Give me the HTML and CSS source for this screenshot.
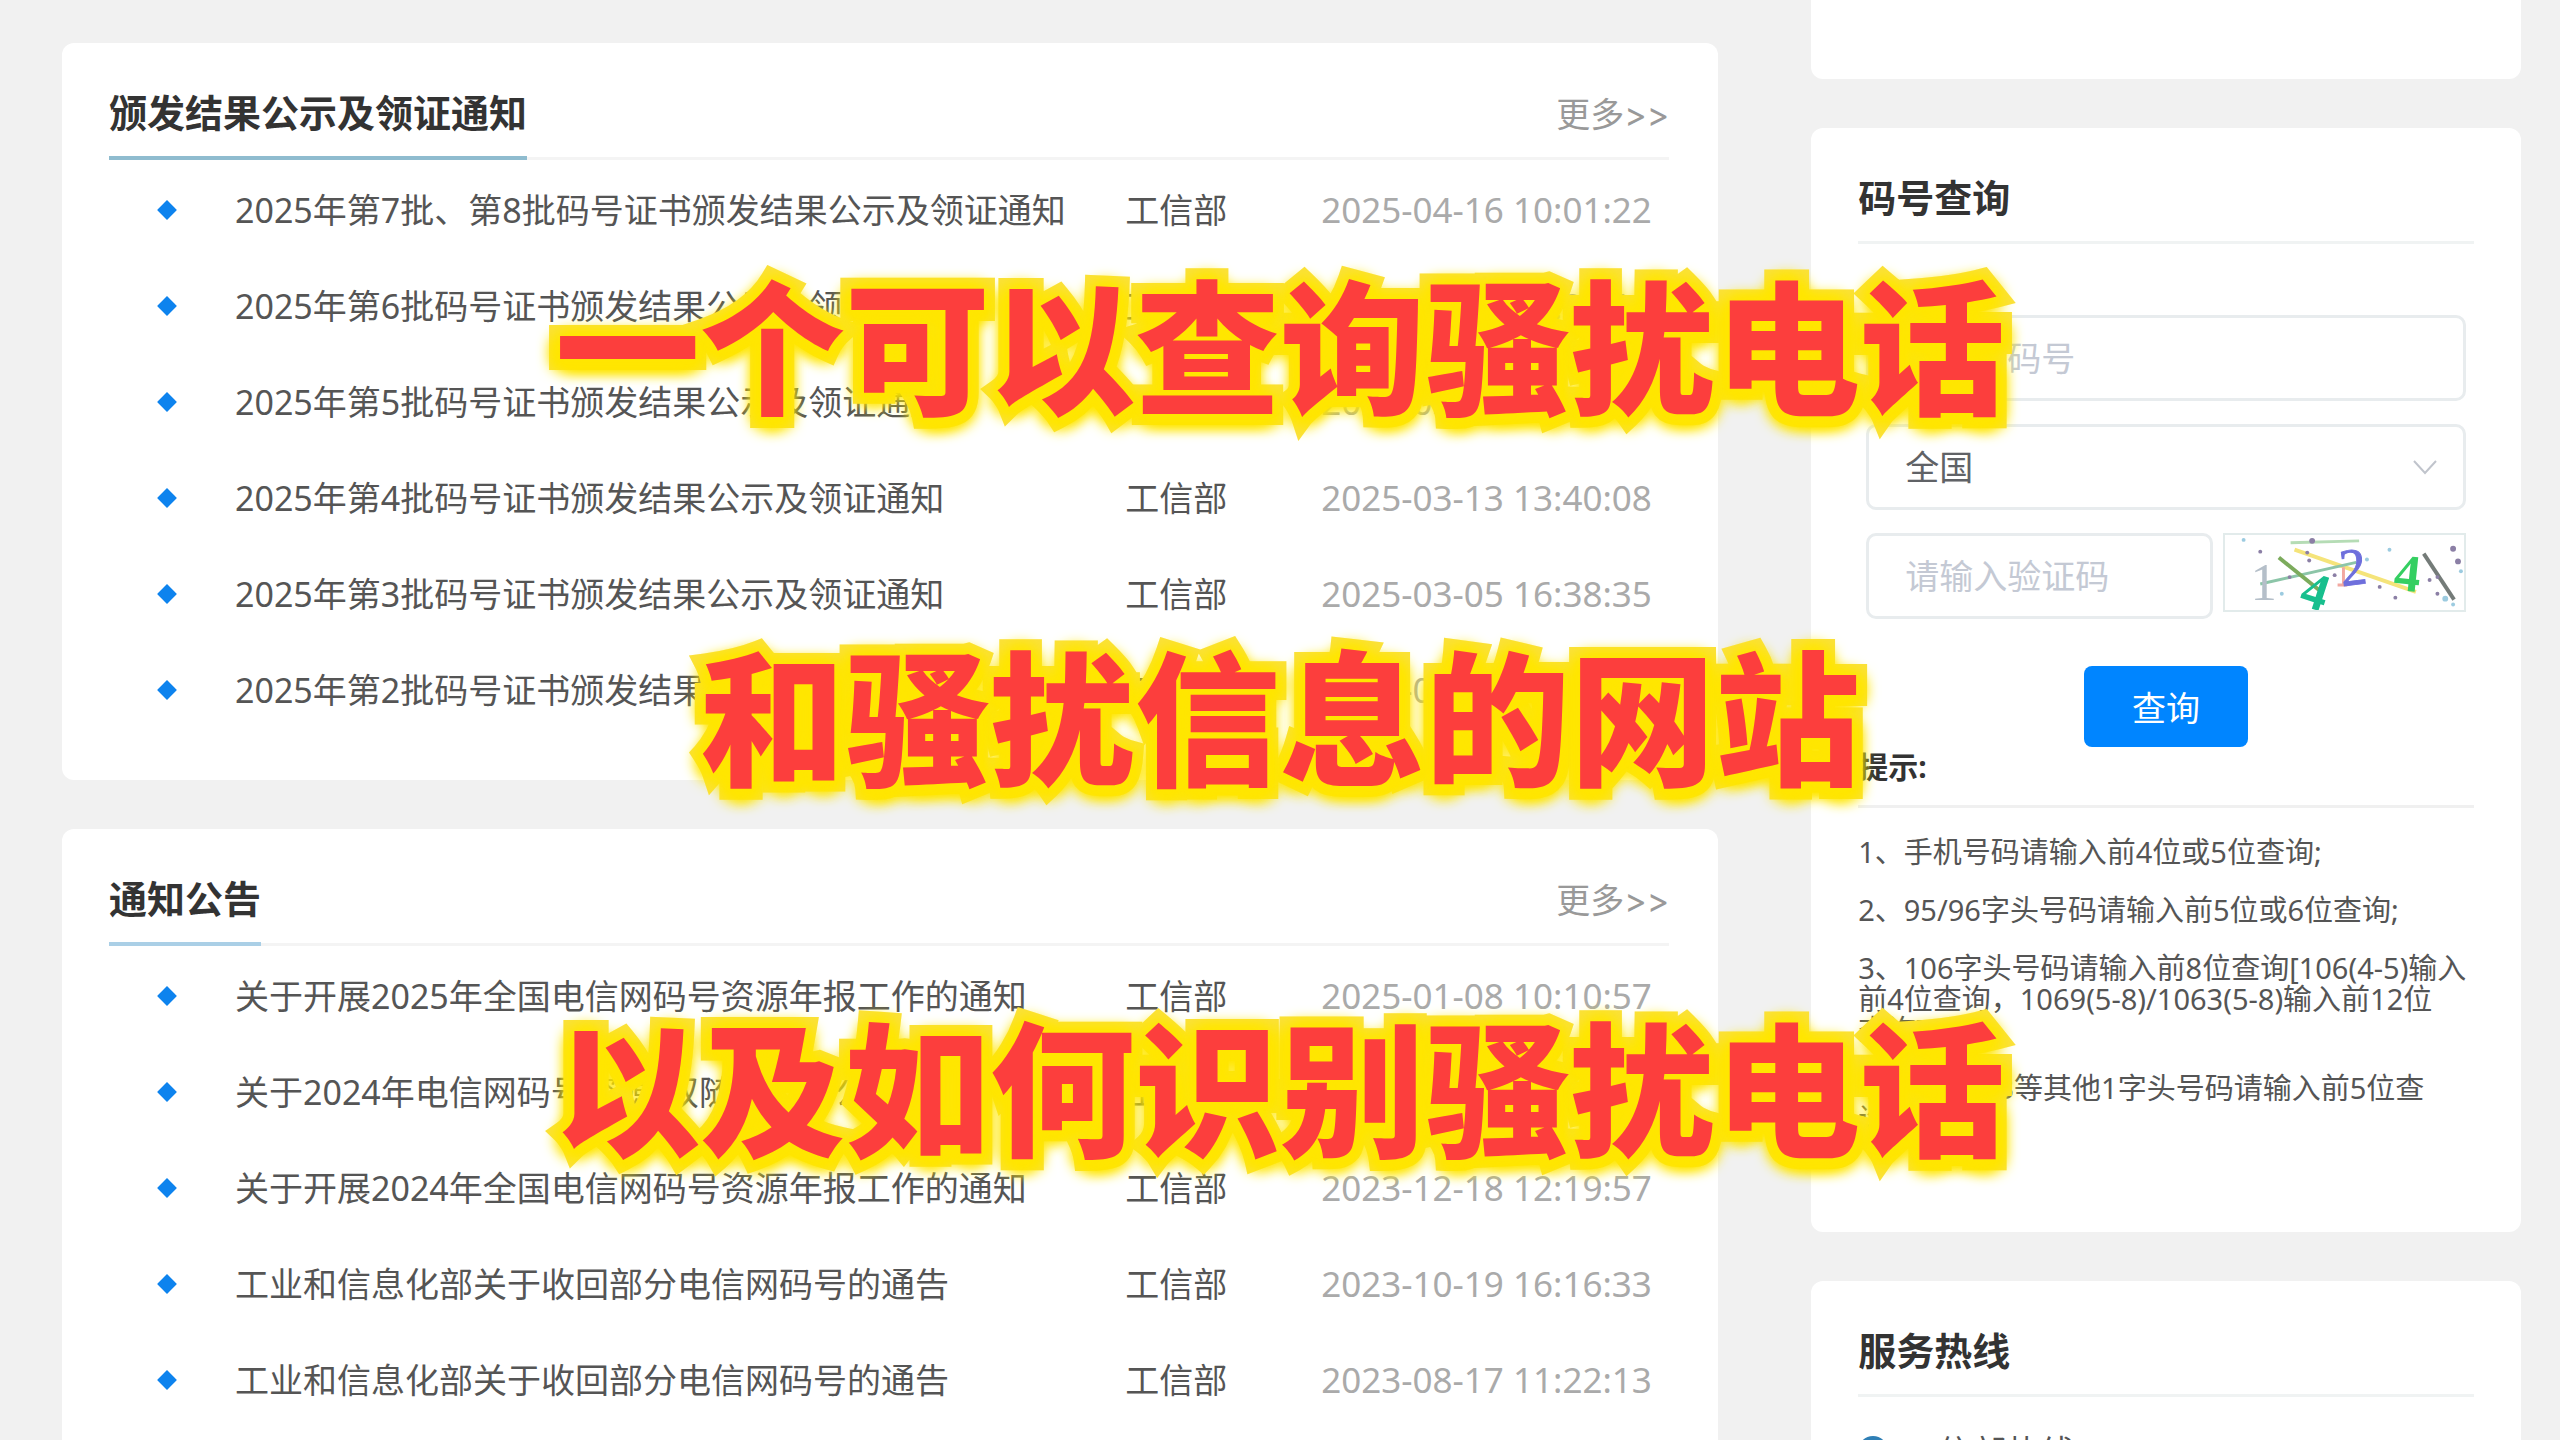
FILE: index.html
```
<!DOCTYPE html>
<html lang="zh-CN">
<head>
  <meta charset="UTF-8">
  <meta name="viewport" content="width=device-width, initial-scale=1.0">
  <title>码号查询</title>
  <link rel="stylesheet" href="styles.css">
</head>
<body>
  <div class="page">
    <main class="main-column">
      <section class="card news">
        <div class="card-heading">
          <h2>颁发结果公示及领证通知</h2>
          <a class="more" href="#">更多<span class="arrows">&gt;&gt;</span></a>
        </div>
        <ul class="news-list">
          <li><a href="#">2025年第7批、第8批码号证书颁发结果公示及领证通知</a><span class="source">工信部</span><time>2025-04-16 10:01:22</time></li>
          <li><a href="#">2025年第6批码号证书颁发结果公示及领证通知</a><span class="source">工信部</span><time>2025-04-03 15:20:16</time></li>
          <li><a href="#">2025年第5批码号证书颁发结果公示及领证通知</a><span class="source">工信部</span><time>2025-03-20 10:12:31</time></li>
          <li><a href="#">2025年第4批码号证书颁发结果公示及领证通知</a><span class="source">工信部</span><time>2025-03-13 13:40:08</time></li>
          <li><a href="#">2025年第3批码号证书颁发结果公示及领证通知</a><span class="source">工信部</span><time>2025-03-05 16:38:35</time></li>
          <li><a href="#">2025年第2批码号证书颁发结果公示及领证通知</a><span class="source">工信部</span><time>2025-02-20 09:30:00</time></li>
        </ul>
      </section>

      <section class="card news">
        <div class="card-heading notice">
          <h2>通知公告</h2>
          <a class="more" href="#">更多<span class="arrows">&gt;&gt;</span></a>
        </div>
        <ul class="news-list">
          <li><a href="#">关于开展2025年全国电信网码号资源年报工作的通知</a><span class="source">工信部</span><time>2025-01-08 10:10:57</time></li>
          <li><a href="#">关于2024年电信网码号资源“双随机、一公开”</a><span class="source">工信部</span><time>2024-08-20 10:30:11</time></li>
          <li><a href="#">关于开展2024年全国电信网码号资源年报工作的通知</a><span class="source">工信部</span><time>2023-12-18 12:19:57</time></li>
          <li><a href="#">工业和信息化部关于收回部分电信网码号的通告</a><span class="source">工信部</span><time>2023-10-19 16:16:33</time></li>
          <li><a href="#">工业和信息化部关于收回部分电信网码号的通告</a><span class="source">工信部</span><time>2023-08-17 11:22:13</time></li>
        </ul>
      </section>
    </main>

    <aside class="side-column">
      <section class="card side-top"></section>

      <section class="card side-card">
        <h2>码号查询</h2>
        <form class="query-form">
          <input type="text" aria-label="码号" placeholder="请输入码号">
          <div class="select-box">
            <select aria-label="地区">
              <option>全国</option>
            </select>
            <svg class="chevron" viewBox="0 0 26 16" aria-hidden="true">
              <path d="M2 2 L13 14 L24 2" />
            </svg>
          </div>
          <div class="captcha-row">
            <input type="text" aria-label="验证码" placeholder="请输入验证码">
            <svg class="captcha" viewBox="0 0 244 77" role="img" aria-label="验证码图片">
              <g fill="none" stroke-width="3">
                <path stroke="#b5dcb5" d="M67 8 L137 6" />
                <path stroke="#f5e47a" stroke-width="4" d="M71 15 L195 58" />
                <path stroke="#8cc5a8" d="M36 50 L134 28" />
                <path stroke="#7cab5c" stroke-width="4" d="M55 23 L97 57" />
                <path stroke="#747b78" stroke-width="4" d="M203 19 L234 66" />
                <path stroke="#f2a8a0" d="M121 33 V51 M115 51 H125" />
              </g>
              <g class="captcha-digits">
                <text x="26" y="66" fill="#b5bfc9">1</text>
                <text x="78" y="75" fill="#18bf8e" font-weight="bold" transform="rotate(18 90 60)">4</text>
                <text x="118" y="51" fill="#6e6fdc" stroke="#6e6fdc" transform="rotate(-7 130 40)">2</text>
                <text x="173" y="57" fill="#35cf62" font-weight="bold" transform="rotate(6 184 40)">4</text>
              </g>
              <g fill="#8b7fa5">
                <circle cx="36" cy="17" r="2" /><circle cx="89" cy="6" r="3" />
                <circle cx="84" cy="18" r="2" /><circle cx="86" cy="26" r="2" />
                <circle cx="112" cy="41" r="2" /><circle cx="66" cy="43" r="2" />
                <circle cx="158" cy="53" r="2" /><circle cx="174" cy="64" r="2" />
                <circle cx="209" cy="46" r="2" /><circle cx="217" cy="43" r="2" />
                <circle cx="217" cy="60" r="2" /><circle cx="233" cy="14" r="3" />
                <circle cx="238" cy="27" r="3" />
              </g>
              <g fill="#9ccbe0">
                <circle cx="19" cy="5" r="2" /><circle cx="168" cy="15" r="2" />
                <circle cx="225" cy="65" r="3" /><circle cx="233" cy="71" r="2" />
                <circle cx="241" cy="37" r="2" /><circle cx="58" cy="60" r="2" />
                <circle cx="145" cy="25" r="2" />
              </g>
            </svg>
          </div>
          <button type="submit">查询</button>
        </form>
        <h3>提示:</h3>
        <div class="tips">
          <p>1、手机号码请输入前4位或5位查询;</p>
          <p>2、95/96字头号码请输入前5位或6位查询;</p>
          <p>3、106字头号码请输入前8位查询[106(4-5)输入<br>前4位查询，1069(5-8)/1063(5-8)输入前12位<br>查询];</p>
          <p>4、116/123等其他1字头号码请输入前5位查<br>询。</p>
        </div>
      </section>

      <section class="card side-card hotline">
        <h2>服务热线</h2>
        <p>
          <svg class="phone" viewBox="0 0 30 30" aria-hidden="true">
            <circle cx="15" cy="15" r="15" />
          </svg>
          工信部热线：12300
        </p>
      </section>
    </aside>
  </div>

  <div class="caption">
    <p>一个可以查询骚扰电话</p>
    <p>和骚扰信息的网站</p>
    <p>以及如何识别骚扰电话</p>
  </div>
</body>
</html>
```

FILE: styles.css
```
* {
  box-sizing: border-box;
  margin: 0;
  padding: 0;
}

body {
  position: relative;
  height: 100vh;
  overflow: hidden;
  font-family: "Noto Sans", "Noto Sans CJK SC", sans-serif;
  font-size: 34px;
  color: #555;
  background-color: #f1f1f1;
}

a {
  color: inherit;
  text-decoration: none;
}

.page {
  display: grid;
  grid-template-columns: minmax(0, 7fr) minmax(0, 3fr);
  gap: 93px;
  padding: 0 39px 0 62px;
}

.main-column,
.side-column {
  display: flex;
  flex-direction: column;
  gap: 49px;
}

.main-column {
  padding-top: 43px;
}

.card {
  background-color: #fff;
  border-radius: 12px;
}

h2 {
  font-size: 38px;
  line-height: 56px;
  color: #333;
}

/* news lists */
.news {
  padding: 41px 49px 42px 47px;
}

.card-heading {
  display: flex;
  justify-content: space-between;
  margin-bottom: 2px;
  border-bottom: 3px solid #f4f4f4;
}

.card-heading h2 {
  padding-bottom: 16px;
  margin-bottom: -3px;
  border-bottom: 4px solid #8fbccf;
}

.card-heading.notice h2 {
  border-bottom-color: #aacfe6;
}

.more {
  line-height: 60px;
  color: #999;
}

.arrows {
  font-family: Inter, sans-serif;
}

.news-list {
  list-style: none;
}

.news-list li {
  display: grid;
  grid-template-columns: 75px minmax(0, 1fr) 196px 348px;
  align-items: center;
  padding-left: 51px;
  line-height: 96px;
  white-space: nowrap;
}

.news-list li::before {
  content: "";
  width: 14px;
  height: 14px;
  background-color: #0d83ee;
  transform: rotate(45deg);
}

.news-list time {
  font-size: 35px;
  color: #aaa;
}

/* sidebar */
.side-top {
  height: 79px;
  border-top-left-radius: 0;
  border-top-right-radius: 0;
}

.side-card {
  padding: 41px 47px 98px;
}

.side-card h2 {
  padding-bottom: 16px;
  border-bottom: 3px solid #f0f3f3;
}

.query-form {
  display: flex;
  flex-direction: column;
  gap: 23px;
  padding: 71px 8px 0;
}

.query-form input,
.query-form select {
  width: 100%;
  height: 86px;
  padding: 0 36px;
  font: inherit;
  color: #606266;
  background-color: #fff;
  border: 3px solid #e8ecee;
  border-radius: 10px;
  outline: none;
}

.query-form input::placeholder {
  color: #c4c9d4;
}

.select-box {
  position: relative;
  display: flex;
}

.query-form select {
  appearance: none;
}

.chevron {
  position: absolute;
  top: 35px;
  right: 28px;
  width: 26px;
  height: 16px;
  fill: none;
  stroke: #c0c4cc;
  stroke-width: 2;
  pointer-events: none;
}

.captcha-row {
  display: grid;
  grid-template-columns: minmax(0, 10fr) minmax(0, 7fr);
  gap: 10px;
}

.captcha {
  width: 100%;
  border: 2px solid #e2ebeb;
}

.captcha-digits {
  font-family: "Liberation Serif", serif;
  font-size: 54px;
}

.query-form button {
  align-self: center;
  height: 81px;
  padding: 0 48px;
  margin-top: 24px;
  font: inherit;
  color: #fff;
  background-color: #0085ff;
  border: none;
  border-radius: 8px;
  cursor: pointer;
}

.side-card h3 {
  padding-bottom: 18px;
  border-bottom: 3px solid #f0f0f0;
  font-size: 30px;
  line-height: 40px;
  color: #333;
}

.tips {
  display: flex;
  flex-direction: column;
  gap: 27px;
  padding-top: 28px;
  font-size: 29px;
  line-height: 31px;
  white-space: nowrap;
}

.hotline p {
  display: flex;
  align-items: center;
  gap: 16px;
  padding-top: 29px;
  white-space: nowrap;
}

.phone {
  width: 30px;
  fill: #2f7fb5;
}

/* caption laid over the page */
.caption {
  position: absolute;
  top: 156px;
  left: 0;
  width: 100%;
  font-family: "Noto Sans CJK SC", sans-serif;
  font-size: 145px;
  font-weight: 900;
  line-height: 371px;
  text-align: center;
  white-space: nowrap;
  color: #fc3e3d;
  -webkit-text-stroke: 22px #fbe13a;
  paint-order: stroke fill;
  text-shadow:
    0 -6px 14px #ffe600,
    -9px 0 14px #ffe600,
    9px 0 14px #ffe600,
    -9px 10px 14px #ffe600,
    9px 10px 14px #ffe600,
    0 14px 14px #ffe600;
  pointer-events: none;
}
```
